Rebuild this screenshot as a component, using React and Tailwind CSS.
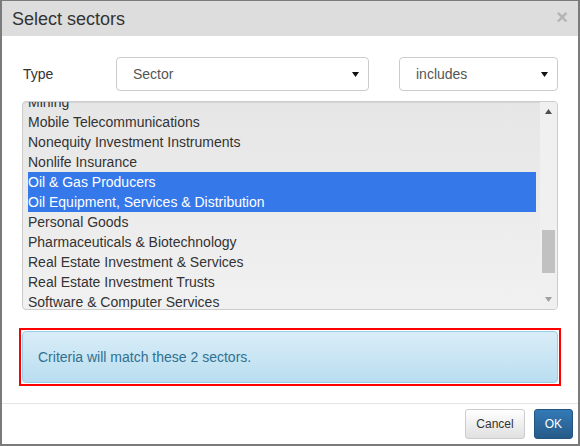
import React from 'react'

const sectors = [
  'Mining',
  'Mobile Telecommunications',
  'Nonequity Investment Instruments',
  'Nonlife Insurance',
  'Oil & Gas Producers',
  'Oil Equipment, Services & Distribution',
  'Personal Goods',
  'Pharmaceuticals & Biotechnology',
  'Real Estate Investment & Services',
  'Real Estate Investment Trusts',
  'Software & Computer Services',
  'Support Services',
]

const selected = ['Oil & Gas Producers', 'Oil Equipment, Services & Distribution']

const Caret = ({ up = false, className = '' }) => (
  <svg width="7" height="5" viewBox="0 0 7 5" className={className}>
    {up ? <path d="M0 5 L3.5 0 L7 5 Z" fill="currentColor" /> : <path d="M0 0 L7 0 L3.5 5 Z" fill="currentColor" />}
  </svg>
)

const SelectBox = ({ value, width }) => (
  <div className={`${width} h-[34px] flex items-center justify-between pl-[16px] pr-[9px] bg-white border border-[#cccccc] rounded-[4px] text-[14px] text-[#555555]`}>
    <span>{value}</span>
    <Caret className="text-[#111111]" />
  </div>
)

export default function App() {
  return (
    <div
      className="w-[580px] h-[446px] flex flex-col bg-white border-[#7b7b7b] border-t border-l-2 border-r-2 border-b-2 overflow-hidden"
      style={{ fontFamily: '"Liberation Sans", Arial, sans-serif' }}
    >
      {/* Header */}
      <div className="h-[35px] shrink-0 bg-[#dddddd] flex items-center justify-between pl-[10px] pr-[10px]">
        <h4 className="text-[18px] text-[#333333] leading-none">Select sectors</h4>
        <span className="text-[20px] font-bold text-[#b4b4b4] leading-none -mt-[4px]">×</span>
      </div>

      {/* Body */}
      <div className="px-[20px] pt-[21px] pb-[17px]">
        <div className="flex items-center">
          <label className="w-[94px] text-[14px] text-[#333333] pl-[1px]">Type</label>
          <SelectBox value="Sector" width="w-[253px]" />
          <div className="w-[30px]" />
          <SelectBox value="includes" width="w-[159px]" />
        </div>

        {/* Sector listbox */}
        <div className="mt-[10px] h-[209px] flex border border-[#cccccc] rounded-[4px] overflow-hidden bg-gradient-to-b from-[#e6e6e6] to-[#f1f1f1] shadow-[inset_0_1px_1px_rgba(0,0,0,0.075)]">
          <div className="flex-1 overflow-hidden pl-[5px] pr-[4px]">
            <div className="-mt-[10px]">
              {sectors.map(s => {
                const on = selected.includes(s)
                return (
                  <div
                    key={s}
                    className={`h-[20px] leading-[20px] text-[14px] ${on ? 'bg-[#3478ea] text-white' : 'text-[#333333]'}`}
                  >
                    {s}
                  </div>
                )
              })}
            </div>
          </div>
          <div className="w-[17px] shrink-0 bg-[#f0f0f0] flex flex-col items-center">
            <div className="h-[17px] flex items-center justify-center pt-[2px]">
              <Caret up className="text-[#505050]" />
            </div>
            <div className="flex-1 w-full px-[2px] pt-[111px]">
              <div className="h-[43px] bg-[#c1c1c1]" />
            </div>
            <div className="h-[17px] flex items-center justify-center pb-[2px]">
              <Caret className="text-[#a0a0a0]" />
            </div>
          </div>
        </div>

        {/* Result info */}
        <div className="mt-[18px] -mx-[3px] p-px border-2 border-[#ff0000]">
          <div className="h-[52px] flex items-center px-[15px] border border-[#9acfea] rounded-[4px] bg-gradient-to-b from-[#d9edf7] to-[#b9def0] text-[14px] text-[#31708f]">
            Criteria will match these 2 sectors.
          </div>
        </div>
      </div>

      {/* Footer */}
      <div className="flex-1 border-t border-[#e5e5e5] flex justify-end items-start pt-[5px] pr-[5px] gap-[9px]">
        <button className="h-[30px] px-[10px] text-[12px] text-[#333333] border border-[#cccccc] rounded-[3px] bg-gradient-to-b from-white to-[#e0e0e0]">
          Cancel
        </button>
        <button className="h-[30px] px-[10px] text-[12px] text-white border border-[#245580] rounded-[3px] bg-gradient-to-b from-[#337ab7] to-[#265a88]">
          OK
        </button>
      </div>
    </div>
  )
}
